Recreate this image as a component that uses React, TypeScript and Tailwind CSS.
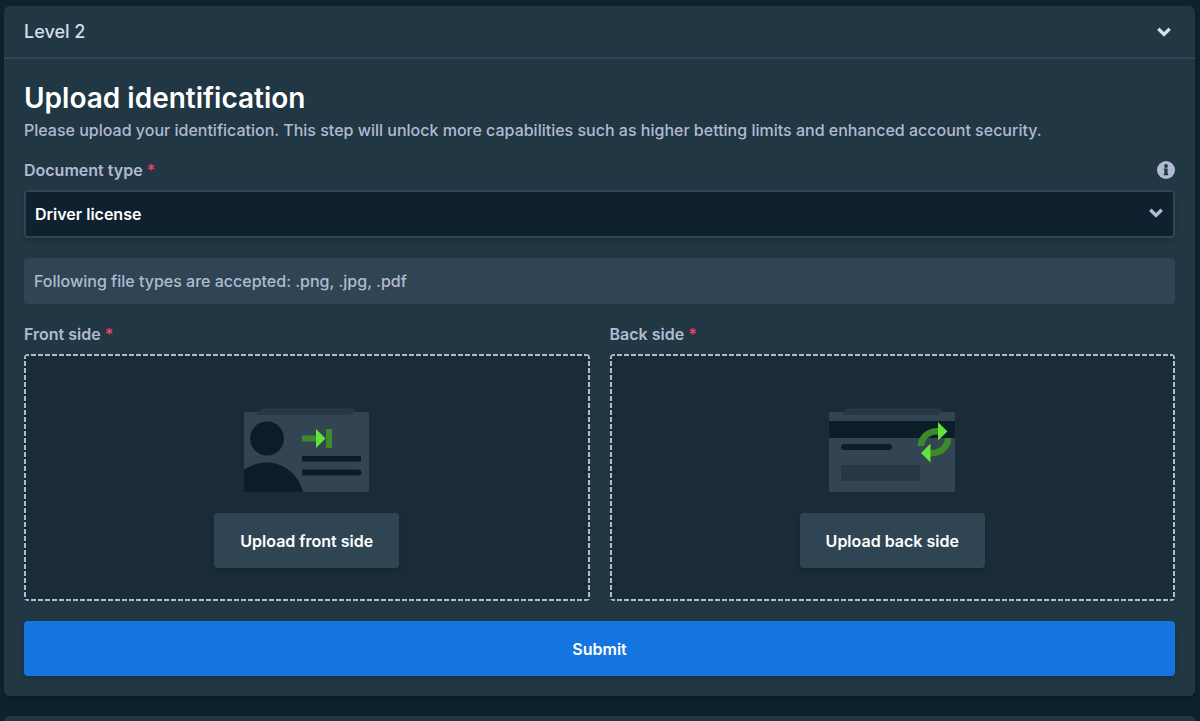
import React from 'react'

const Chevron = ({ className }: { className: string }) => (
  <svg viewBox="0 0 14 10" className={className} fill="none" aria-hidden="true">
    <path d="M1.3 1.8L7 7.4L12.7 1.8" stroke="currentColor" strokeWidth="3.4" />
  </svg>
)

const InfoIcon = () => (
  <svg viewBox="0 0 18 18" className="h-[18px] w-[18px]" aria-hidden="true">
    <circle cx="9" cy="9" r="9" fill="#b1bad3" />
    <circle cx="9" cy="5" r="1.9" fill="#213743" />
    <path d="M6.8 7.6h3.8v5h.6v1.6H6.8v-1.6h.6V9.1h-.6z" fill="#213743" />
  </svg>
)

const FrontCard = () => (
  <svg viewBox="0 0 126 84" className="h-[84px] w-[126px]" aria-hidden="true">
    <rect x="0" y="4" width="125" height="80" rx="1.5" fill="#334552" />
    <path d="M13 7C14 3 17 .5 21 .5H111C111 4 108 7 104 7z" fill="#273843" />
    <circle cx="23" cy="30.5" r="17" fill="#0b1e28" />
    <path d="M0 62C7 57 15 54.5 23 54.5C40 54.5 55 67 59 84H1.5Q0 84 0 82.5z" fill="#0b1e28" />
    <path d="M58 48H117V53.5H58zM58 61.5H114.5A2.75 2.75 0 0 1 114.5 67.5H58z" fill="#0b1e28" />
    <path d="M58 27.5H73V33.5H58zM82 21H88V40H82z" fill="#3c8a28" />
    <path d="M72 21L81.5 30.5L72 40z" fill="#62e23c" />
  </svg>
)

const BackCard = () => (
  <svg viewBox="0 0 126 84" className="h-[84px] w-[126px]" aria-hidden="true">
    <rect x="0" y="4" width="126" height="80" rx="1.5" fill="#334552" />
    <path d="M13 7C14 3 17 .5 21 .5H113C113 4 110 7 106 7z" fill="#273843" />
    <rect x="0" y="13" width="126" height="17" fill="#0b1e28" />
    <rect x="12" y="36" width="51" height="6" rx="3" fill="#0b1e28" />
    <rect x="12" y="57" width="79" height="16" fill="#273843" />
    <path
      d="M92 38C92 29 100 22.5 110 23.2M119 30C119 39 111 45.8 101 45"
      fill="none"
      stroke="#3c8a28"
      strokeWidth="6.5"
    />
    <path d="M109 14L118.5 23.5L109 32.5zM101.5 35.5V54.5L92 45z" fill="#62e23c" />
  </svg>
)

const Required = () => <span className="text-[#ed4163]">*</span>

interface UploadBoxProps {
  id: string
  label: string
  action: string
  children: React.ReactNode
}

const UploadBox = ({ id, label, action, children }: UploadBoxProps) => (
  <div className="min-w-0 flex-1">
    <h2 id={id} className="mb-2 text-base leading-6 font-semibold">
      {label} <Required />
    </h2>
    <div
      role="group"
      aria-labelledby={id}
      className="flex flex-col items-center rounded bg-[#1a2c38] pt-[54px] pb-[33px] [background-image:linear-gradient(90deg,#b1bad3_5px,transparent_0),linear-gradient(90deg,#b1bad3_5px,transparent_0),linear-gradient(#b1bad3_5px,transparent_0),linear-gradient(#b1bad3_5px,transparent_0)] [background-position:0_0,0_100%,0_0,100%_0] [background-repeat:repeat-x,repeat-x,repeat-y,repeat-y] [background-size:7px_2px,7px_2px,2px_7px,2px_7px]"
    >
      {children}
      <button
        type="button"
        className="mt-[21px] h-[55px] rounded bg-[#2f4553] px-[26px] text-base leading-6 font-semibold text-white shadow-md"
      >
        {action}
      </button>
    </div>
  </div>
)

const App = () => {
  return (
    <div className="min-h-screen bg-[#0f212e] px-1 pt-1.5 font-['Inter',sans-serif] text-[#b1bad3]">
      <section className="mr-px rounded-md bg-[#213743] shadow-md">
        <button
          type="button"
          aria-expanded="true"
          className="flex h-[53px] w-full items-center justify-between border-b-2 border-[#2f4553] px-5 text-left text-lg leading-7 font-medium text-[#d5dceb]"
        >
          Level 2
          <Chevron className="mr-1 h-2.5 w-3.5" />
        </button>

        <form className="px-5 pt-[19px] pb-5" onSubmit={(e) => e.preventDefault()}>
          <h1 className="text-[28px] leading-10 font-semibold text-white">Upload identification</h1>
          <p className="text-base leading-6 font-medium">
            Please upload your identification. This step will unlock more capabilities such as higher
            betting limits and enhanced account security.
          </p>

          <div className="mt-4 mb-2 flex items-center justify-between">
            <label htmlFor="document-type" className="text-base leading-6 font-semibold">
              Document type <Required />
            </label>
            <InfoIcon />
          </div>
          <div className="relative">
            <select
              id="document-type"
              defaultValue="driver"
              className="block h-12 w-full appearance-none rounded border-2 border-[#2f4553] bg-[#0f212e] px-[9px] text-base font-semibold text-white shadow-md"
            >
              <option value="driver">Driver license</option>
            </select>
            <Chevron className="pointer-events-none absolute top-[18px] right-3 h-2.5 w-3.5" />
          </div>

          <p className="mt-5 rounded bg-[#2f4553] px-2.5 py-[11px] text-base leading-6 font-medium">
            Following file types are accepted: .png, .jpg, .pdf
          </p>

          <div className="mt-[18px] flex gap-5">
            <UploadBox id="front-side" label="Front side" action="Upload front side">
              <FrontCard />
            </UploadBox>
            <UploadBox id="back-side" label="Back side" action="Upload back side">
              <BackCard />
            </UploadBox>
          </div>

          <button
            type="submit"
            className="mt-5 h-[55px] w-full rounded bg-[#1475e1] text-base font-semibold text-white shadow-md"
          >
            Submit
          </button>
        </form>
      </section>
      <section className="mt-5 mr-px h-[5px] rounded-t-md bg-[#213743]" />
    </div>
  )
}

export default App
